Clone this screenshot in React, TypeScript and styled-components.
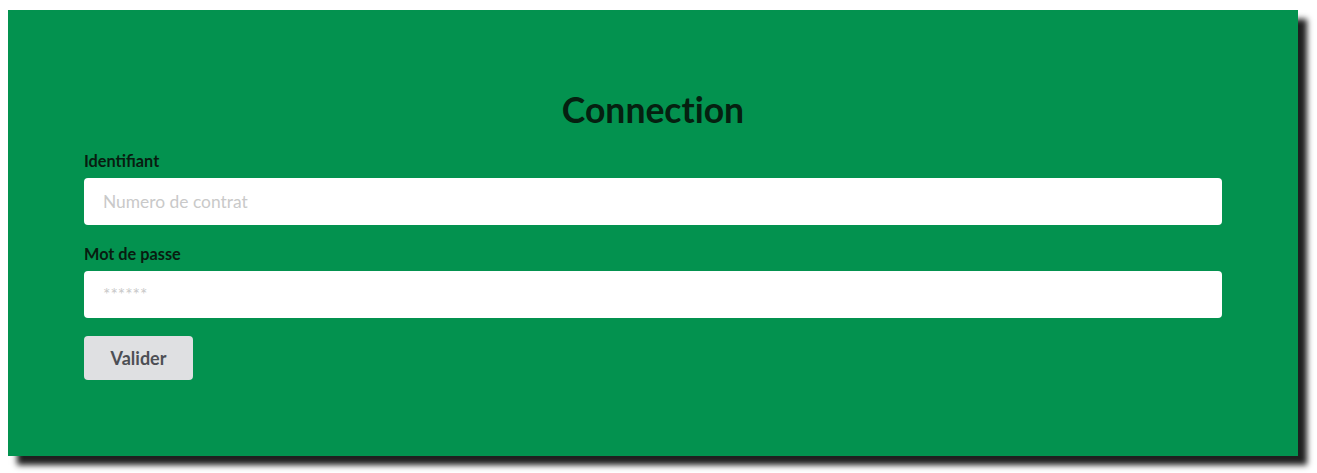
import React from "react";
import styled, { createGlobalStyle } from "styled-components";

const Global = createGlobalStyle`
  html, body { margin: 0; padding: 0; background: #ffffff; }
  body {
    padding: 10px 0 17px 8px;
    min-height: 473px;
    font-family: Lato, "Open Sans", sans-serif;
  }
  * { box-sizing: border-box; }
`;

const Panel = styled.form`
  width: 1290px;
  height: 446px;
  background: #03924f;
  box-shadow: 9px 9px 6px #1f1f1f;
  padding: 0 76px;
  display: flex;
  flex-direction: column;
  align-items: stretch;
`;

const Title = styled.h1`
  margin: 80px 0 21px;
  font-size: 35.5px;
  line-height: 40px;
  font-weight: 700;
  color: #052010;
  text-align: center;
  font-variant-ligatures: no-common-ligatures no-discretionary-ligatures;
  font-feature-settings: "liga" 0, "dlig" 0;
`;

const Label = styled.label<{ $top?: number }>`
  display: block;
  margin: ${(p) => p.$top ?? 0}px 0 7px;
  font-size: 16.3px;
  line-height: 20px;
  font-weight: 700;
  color: #081c10;
`;

const Input = styled.input`
  display: block;
  width: 100%;
  height: 47px;
  border: none;
  border-radius: 4px;
  background: #ffffff;
  padding: 0 19px;
  font-family: Lato, "Open Sans", sans-serif;
  font-size: 17.4px;
  color: #333;
  outline: none;
  &::placeholder { color: #c9c9c9; }
`;

const Button = styled.button`
  align-self: flex-start;
  margin-top: 18px;
  width: 109px;
  height: 44px;
  border: none;
  border-radius: 4px;
  background: #dfe0e2;
  font-family: Lato, "Open Sans", sans-serif;
  font-size: 18px;
  font-weight: 700;
  color: #4d4f55;
  cursor: pointer;
`;

export default function App() {
  return (
    <>
      <Global />
      <Panel onSubmit={(e) => e.preventDefault()}>
        <Title>Connection</Title>
        <Label>Identifiant</Label>
        <Input placeholder="Numero de contrat" />
        <Label $top={19}>Mot de passe</Label>
        <Input type="password" placeholder="******" />
        <Button type="submit">Valider</Button>
      </Panel>
    </>
  );
}
